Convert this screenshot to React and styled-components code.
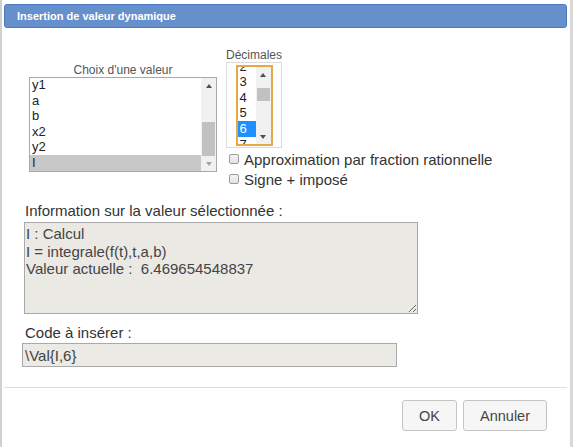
import React from 'react';
import styled, { createGlobalStyle } from 'styled-components';

const GlobalStyle = createGlobalStyle`
  html, body {
    margin: 0;
    padding: 0;
    background: #fff;
  }
  body {
    font-family: "Liberation Sans", Arial, sans-serif;
    color: #333;
  }
`;

const Dialog = styled.div`
  width: 573px;
  height: 447px;
  box-sizing: border-box;
  border-left: 2px solid #d0d0d0;
  border-right: 3px solid #d8d8d8;
  overflow: hidden;
`;

const TitleBar = styled.div`
  margin: 4px 3px 0 2px;
  height: 24px;
  box-sizing: border-box;
  padding-left: 12px;
  display: flex;
  align-items: center;
  background: #6590cc;
  border: 1px solid #4a79c4;
  border-radius: 3px;
  color: #fff;
  font-size: 11px;
  font-weight: bold;
`;

const TopRow = styled.div`
  display: flex;
  align-items: flex-start;
  margin-top: 20px;
  padding-left: 27px;
`;

const ValueColumn = styled.div`
  width: 188px;
  margin-top: 15px;
`;

const DecimalColumn = styled.div`
  margin-left: 9px;
`;

const SmallLabel = styled.div`
  width: ${p => p.$width || 'auto'};
  font-size: 12px;
  line-height: 14px;
  color: #555;
  text-align: center;
`;

const ListBox = styled.div`
  height: 95px;
  box-sizing: border-box;
  display: flex;
  border: 1px solid #a9a9a9;
  background: #fff;
  overflow: hidden;
`;

const DecBox = styled.div`
  width: 56px;
  height: 86px;
  box-sizing: border-box;
  padding-top: 2px;
  border: 1px solid #dcdcdc;
`;

const DecSelect = styled.div`
  width: 37px;
  height: 81px;
  margin: 0 auto;
  box-sizing: border-box;
  display: flex;
  border: 2px solid #e6a745;
  background: #fff;
  overflow: hidden;
`;

const Options = styled.div`
  flex: 1;
  overflow: hidden;
`;

const OptionsInner = styled.div`
  margin-top: ${p => p.$offset}px;
`;

const Option = styled.div`
  height: 15.6px;
  line-height: 15.6px;
  padding-left: 2px;
  font-size: 13px;
  white-space: nowrap;
  background: ${p => (p.$selected ? (p.$focused ? '#1e90ff' : '#c8c8c8') : 'transparent')};
  color: ${p => (p.$selected && p.$focused ? '#fff' : '#222')};
`;

const ScrollBar = styled.div`
  width: 15px;
  flex: none;
  display: flex;
  flex-direction: column;
  background: #f1f1f1;
`;

const ScrollArrow = styled.div`
  height: 15px;
  flex: none;
  display: flex;
  align-items: center;
  justify-content: center;

  &::after {
    content: '';
    border-left: 3.5px solid transparent;
    border-right: 3.5px solid transparent;
    ${p =>
      p.$down
        ? `border-top: 4px solid ${p.$disabled ? '#a3a3a3' : '#505050'};`
        : `border-bottom: 4px solid ${p.$disabled ? '#a3a3a3' : '#505050'};`}
  }
`;

const Track = styled.div`
  flex: 1;
`;

const Thumb = styled.div`
  margin: ${p => p.$top}px 1px 0;
  height: ${p => p.$height}px;
  background: #c1c1c1;
`;

const CheckRow = styled.label`
  display: flex;
  align-items: center;
  height: 20px;
  margin-left: 3px;
  font-size: 15px;
  color: #333;
  white-space: nowrap;
`;

const CheckBox = styled.span`
  width: 10px;
  height: 10px;
  margin-right: 5px;
  box-sizing: border-box;
  border: 1px solid #9c9c9c;
  border-radius: 2px;
  background: linear-gradient(#f4f4f4, #e2e2e2);
`;

const FieldLabel = styled.div`
  margin: ${p => p.$top}px 0 0 23px;
  font-size: 15px;
  line-height: 17px;
  color: #333;
`;

const InfoArea = styled.textarea`
  display: block;
  width: 394px;
  height: 92px;
  margin: 3.5px 0 0 22px;
  padding: 2px 1px;
  box-sizing: border-box;
  border: 1px solid #a9a9a9;
  border-radius: 0;
  background: #ebe9e4;
  color: #444;
  font-family: inherit;
  font-size: 15px;
  line-height: 17.5px;
  overflow: hidden;
  resize: both;
  outline: none;
`;

const CodeInput = styled.input`
  display: block;
  width: 375px;
  height: 24px;
  margin: 2.5px 0 0 20px;
  padding: 0 2px;
  box-sizing: border-box;
  border: 1px solid #a9a9a9;
  border-radius: 0;
  background: #ebeae4;
  color: #444;
  font-family: inherit;
  font-size: 15px;
  outline: none;
`;

const Separator = styled.div`
  height: 1px;
  margin: 20px 3px 0 2px;
  background: #dddddd;
`;

const ButtonRow = styled.div`
  display: flex;
  justify-content: flex-end;
  gap: 6px;
  margin-top: 12px;
  padding-right: 23px;
`;

const Button = styled.button`
  height: 31px;
  padding: 0 16px;
  border: 1px solid #c5c5c5;
  border-radius: 3px;
  background: #f6f6f6;
  color: #454545;
  font-family: inherit;
  font-size: 14.5px;
`;

const values = ['y1', 'a', 'b', 'x2', 'y2', 'I'];
const decimals = ['2', '3', '4', '5', '6', '7'];

const infoText = 'I : Calcul\nI = integrale(f(t),t,a,b)\nValeur actuelle :  6.469654548837';

const App = () => (
  <>
    <GlobalStyle />
    <Dialog>
      <TitleBar>Insertion de valeur dynamique</TitleBar>
      <TopRow>
        <ValueColumn>
          <SmallLabel>Choix d'une valeur</SmallLabel>
          <ListBox>
            <Options>
              <OptionsInner $offset={-1}>
                {values.map(v => (
                  <Option key={v} $selected={v === 'I'}>
                    {v}
                  </Option>
                ))}
              </OptionsInner>
            </Options>
            <ScrollBar>
              <ScrollArrow />
              <Track>
                <Thumb $top={29} $height={34} />
              </Track>
              <ScrollArrow $down $disabled />
            </ScrollBar>
          </ListBox>
        </ValueColumn>
        <DecimalColumn>
          <SmallLabel $width="56px">Décimales</SmallLabel>
          <DecBox>
            <DecSelect>
              <Options>
                <OptionsInner $offset={-8.4}>
                  {decimals.map(d => (
                    <Option key={d} $selected={d === '6'} $focused>
                      {d}
                    </Option>
                  ))}
                </OptionsInner>
              </Options>
              <ScrollBar>
                <ScrollArrow />
                <Track>
                  <Thumb $top={6} $height={13} />
                </Track>
                <ScrollArrow $down />
              </ScrollBar>
            </DecSelect>
          </DecBox>
          <CheckRow style={{ marginTop: 1 }}>
            <CheckBox />
            Approximation par fraction rationnelle
          </CheckRow>
          <CheckRow>
            <CheckBox />
            Signe + imposé
          </CheckRow>
        </DecimalColumn>
      </TopRow>
      <FieldLabel $top={12.5}>Information sur la valeur sélectionnée :</FieldLabel>
      <InfoArea readOnly value={infoText} />
      <FieldLabel $top={9.5}>Code à insérer :</FieldLabel>
      <CodeInput readOnly value="\Val{I,6}" />
      <Separator />
      <ButtonRow>
        <Button>OK</Button>
        <Button>Annuler</Button>
      </ButtonRow>
    </Dialog>
  </>
);

export default App;
